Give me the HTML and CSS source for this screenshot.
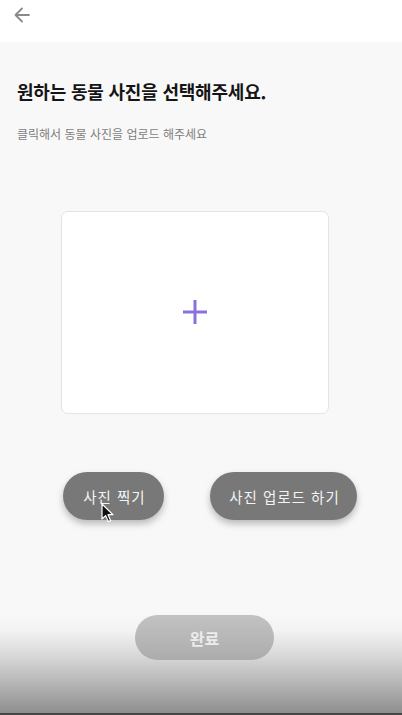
FILE: index.html
```html
<!DOCTYPE html>
<html lang="ko">
<head>
<meta charset="utf-8">
<link rel="stylesheet" href="styles.css">
</head>
<body>
<div class="app">
  <header class="topbar">
    <svg class="back" width="20" height="20" viewBox="0 0 20 20"><path d="M17 10H4M10 3.5L3.5 10L10 16.5" fill="none" stroke="#8a8a8a" stroke-width="1.8" stroke-linecap="round" stroke-linejoin="round"/></svg>
  </header>
  <main class="content">
    <h1 class="title">원하는 동물 사진을 선택해주세요.</h1>
    <p class="subtitle">클릭해서 동물 사진을 업로드 해주세요</p>
    <div class="card">
      <svg width="26" height="26" viewBox="0 0 26 26"><path d="M13 1V25M1 13H25" stroke="#8b71dd" stroke-width="3"/></svg>
    </div>
    <div class="actions">
      <button class="pill btn-take">사진 찍기
        <svg class="cursor" width="14" height="20" viewBox="0 0 14 20"><path d="M1 1V16L4.6 12.6L7.2 18.6L9.6 17.6L7 11.7H12Z" fill="#111" stroke="#fff" stroke-width="1.2" stroke-linejoin="round"/></svg>
      </button>
      <button class="pill btn-upload">사진 업로드 하기</button>
    </div>
  </main>
  <footer class="footer">
    <button class="done">완료</button>
  </footer>
</div>
</body>
</html>
```
FILE: styles.css
```css
* { box-sizing: border-box; }
html, body { margin: 0; padding: 0; }
body {
  background: #f8f8f8;
  font-family: "Noto Sans CJK KR", "Noto Sans", sans-serif;
  color: #111;
}
.app {
  min-height: 715px;
  display: flex;
  flex-direction: column;
}
.topbar {
  height: 42px;
  background: #fff;
  display: flex;
  align-items: center;
  padding-left: 12px;
  padding-bottom: 12px;
}
.back { display: block; }
.content {
  padding-left: 17px;
  flex: 1;
}
.title {
  margin: 37px 0 0;
  font-size: 18px;
  line-height: 24px;
  font-weight: 700;
  letter-spacing: -0.2px;
  color: #151515;
}
.subtitle {
  margin: 23px 0 0;
  font-size: 12px;
  line-height: 16px;
  color: #7d7d7d;
}
.card {
  margin: 69px 0 0 44px;
  width: 268px;
  height: 203px;
  background: #fff;
  border: 1px solid #e4e4e4;
  border-radius: 7px;
  display: flex;
  align-items: center;
  justify-content: center;
}
.card svg { margin-top: -2px; }
.actions {
  margin: 58px 0 0 46px;
  display: flex;
  gap: 46px;
}
.pill {
  position: relative;
  height: 48px;
  border: none;
  border-radius: 24px;
  background: #787878;
  color: #f4f4f4;
  font-family: "Noto Sans CJK KR", sans-serif;
  font-size: 14.5px;
  letter-spacing: 1px;
  box-shadow: 0 4px 7px rgba(0,0,0,0.25);
  padding: 0 0 0 2px;
}
.btn-take { width: 101px; }
.btn-upload { width: 147px; }
.cursor {
  position: absolute;
  left: 38px;
  top: 31px;
}
.footer {
  height: 103px;
  background: linear-gradient(to bottom, #f8f8f8 0%, #f3f3f3 18%, #d6d6d6 45%, #b0b0b0 75%, #8e8e8e 100%);
  border-bottom: 2px solid #454545;
  display: flex;
  justify-content: flex-start;
  padding: 3px 0 0 135px;
}
.done {
  width: 139px;
  height: 45px;
  border: none;
  border-radius: 23px;
  background: linear-gradient(to bottom, #c2c2c2, #acacac);
  color: #ececec;
  font-family: "Noto Sans CJK KR", sans-serif;
  font-size: 16px;
  font-weight: 700;
}
```
